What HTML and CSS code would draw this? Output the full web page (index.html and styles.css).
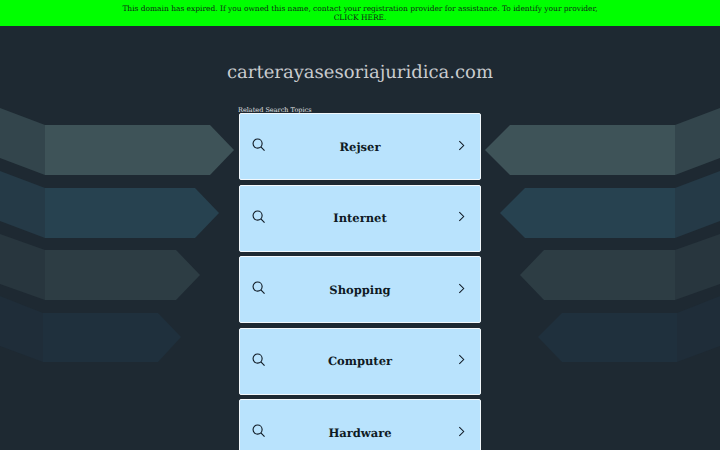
FILE: index.html
```html
<!DOCTYPE html>
<html lang="en">
<head>
<meta charset="utf-8">
<title>carterayasesoriajuridica.com</title>
<link rel="stylesheet" href="styles.css">
</head>
<body>
<svg class="backdrop" viewBox="0 0 720 450" aria-hidden="true">
  <g class="left">
    <polygon fill="#33454c" points="0,108 45,125 45,175 0,158"/>
    <polygon fill="#3e5358" points="45,125 210,125 234,150 210,175 45,175"/>
    <polygon fill="#253a47" points="0,171 45,188 45,238 0,221"/>
    <polygon fill="#274250" points="45,188 195,188 219,213 195,238 45,238"/>
    <polygon fill="#28363e" points="0,234 45,250 45,300 0,284"/>
    <polygon fill="#2d3d44" points="45,250 176,250 200,275 176,300 45,300"/>
    <polygon fill="#1f2d39" points="0,296 43,313 43,362 0,346"/>
    <polygon fill="#1f303d" points="43,313 158,313 181,337 158,362 43,362"/>
  </g>
  <g class="right">
    <polygon fill="#33454c" points="720,108 675,125 675,175 720,158"/>
    <polygon fill="#3e5358" points="675,125 510,125 485,150 510,175 675,175"/>
    <polygon fill="#253a47" points="720,171 675,188 675,238 720,221"/>
    <polygon fill="#274250" points="675,188 525,188 500,213 525,238 675,238"/>
    <polygon fill="#28363e" points="720,234 675,250 675,300 720,284"/>
    <polygon fill="#2d3d44" points="675,250 544,250 520,275 544,300 675,300"/>
    <polygon fill="#1f2d39" points="720,296 677,313 677,362 720,346"/>
    <polygon fill="#1f303d" points="677,313 562,313 538,337 562,362 677,362"/>
  </g>
</svg>
<div class="banner"><p class="banner-text">This domain has expired. If you owned this name, contact your registration provider for assistance. To identify your provider, <a href="#">CLICK HERE</a>.</p></div>
<main class="content">
  <h1 class="domain">carterayasesoriajuridica.com</h1>
  <div class="related">
    <div class="related-label">Related Search Topics</div>
    <a class="topic" href="#">
      <svg class="icon" viewBox="0 0 14 14"><circle cx="5.8" cy="5.8" r="4.7"/><path d="M9.2 9.2 13 13"/></svg>
      <span class="topic-name">Rejser</span>
      <svg class="chev" viewBox="0 0 8 12"><path d="M1.5 1 6.5 6 1.5 11"/></svg>
    </a>
    <a class="topic" href="#">
      <svg class="icon" viewBox="0 0 14 14"><circle cx="5.8" cy="5.8" r="4.7"/><path d="M9.2 9.2 13 13"/></svg>
      <span class="topic-name">Internet</span>
      <svg class="chev" viewBox="0 0 8 12"><path d="M1.5 1 6.5 6 1.5 11"/></svg>
    </a>
    <a class="topic" href="#">
      <svg class="icon" viewBox="0 0 14 14"><circle cx="5.8" cy="5.8" r="4.7"/><path d="M9.2 9.2 13 13"/></svg>
      <span class="topic-name">Shopping</span>
      <svg class="chev" viewBox="0 0 8 12"><path d="M1.5 1 6.5 6 1.5 11"/></svg>
    </a>
    <a class="topic" href="#">
      <svg class="icon" viewBox="0 0 14 14"><circle cx="5.8" cy="5.8" r="4.7"/><path d="M9.2 9.2 13 13"/></svg>
      <span class="topic-name">Computer</span>
      <svg class="chev" viewBox="0 0 8 12"><path d="M1.5 1 6.5 6 1.5 11"/></svg>
    </a>
    <a class="topic" href="#">
      <svg class="icon" viewBox="0 0 14 14"><circle cx="5.8" cy="5.8" r="4.7"/><path d="M9.2 9.2 13 13"/></svg>
      <span class="topic-name">Hardware</span>
      <svg class="chev" viewBox="0 0 8 12"><path d="M1.5 1 6.5 6 1.5 11"/></svg>
    </a>
  </div>
</main>
</body>
</html>
```
FILE: styles.css
```css
html, body {
  margin: 0;
  height: 450px;
  overflow: hidden;
  background: #1e2932;
  font-family: "DejaVu Serif", serif;
  text-rendering: geometricPrecision;
}
.backdrop {
  position: absolute;
  left: 0;
  top: 0;
  width: 720px;
  height: 450px;
}
.banner {
  position: relative;
  height: 25.5px;
  background: #00ff00;
  box-sizing: border-box;
  padding: 4px 120px 0;
  text-align: center;
}
.banner-text {
  margin: 0;
  font-size: 7.48px;
  line-height: 9px;
  color: #0f2a16;
}
.banner-text a {
  color: inherit;
  text-decoration: none;
  white-space: nowrap;
}
.content {
  position: relative;
  display: flex;
  flex-direction: column;
  align-items: center;
}
.domain {
  margin: 35px 0 0;
  font-size: 18px;
  line-height: 23px;
  font-weight: 400;
  color: #c9cccf;
}
.related {
  width: 242px;
  margin-top: 22.5px;
}
.related-label {
  font-size: 6.5px;
  line-height: 9px;
  color: #e0e2e4;
  margin-left: -1px;
  margin-bottom: -2px;
}
.topic {
  display: grid;
  grid-template-columns: 1fr auto 1fr;
  align-items: center;
  box-sizing: border-box;
  height: 67px;
  margin-bottom: 4.5px;
  padding: 0 15px 3px;
  background: #b9e3fd;
  border: 1.5px solid #f2f8fc;
  border-radius: 2px;
  color: #0f1a24;
  text-decoration: none;
}
.topic-name {
  font-size: 11.52px;
  font-weight: 700;
  padding-top: 3px;
}
.icon {
  width: 13.5px;
  height: 13.5px;
  margin-left: -3px;
  fill: none;
  stroke: #0f1a24;
  stroke-width: 1.15;
}
.chev {
  justify-self: end;
  width: 7px;
  height: 11px;
  fill: none;
  stroke: #0f1a24;
  stroke-width: 1.2;
}
```
